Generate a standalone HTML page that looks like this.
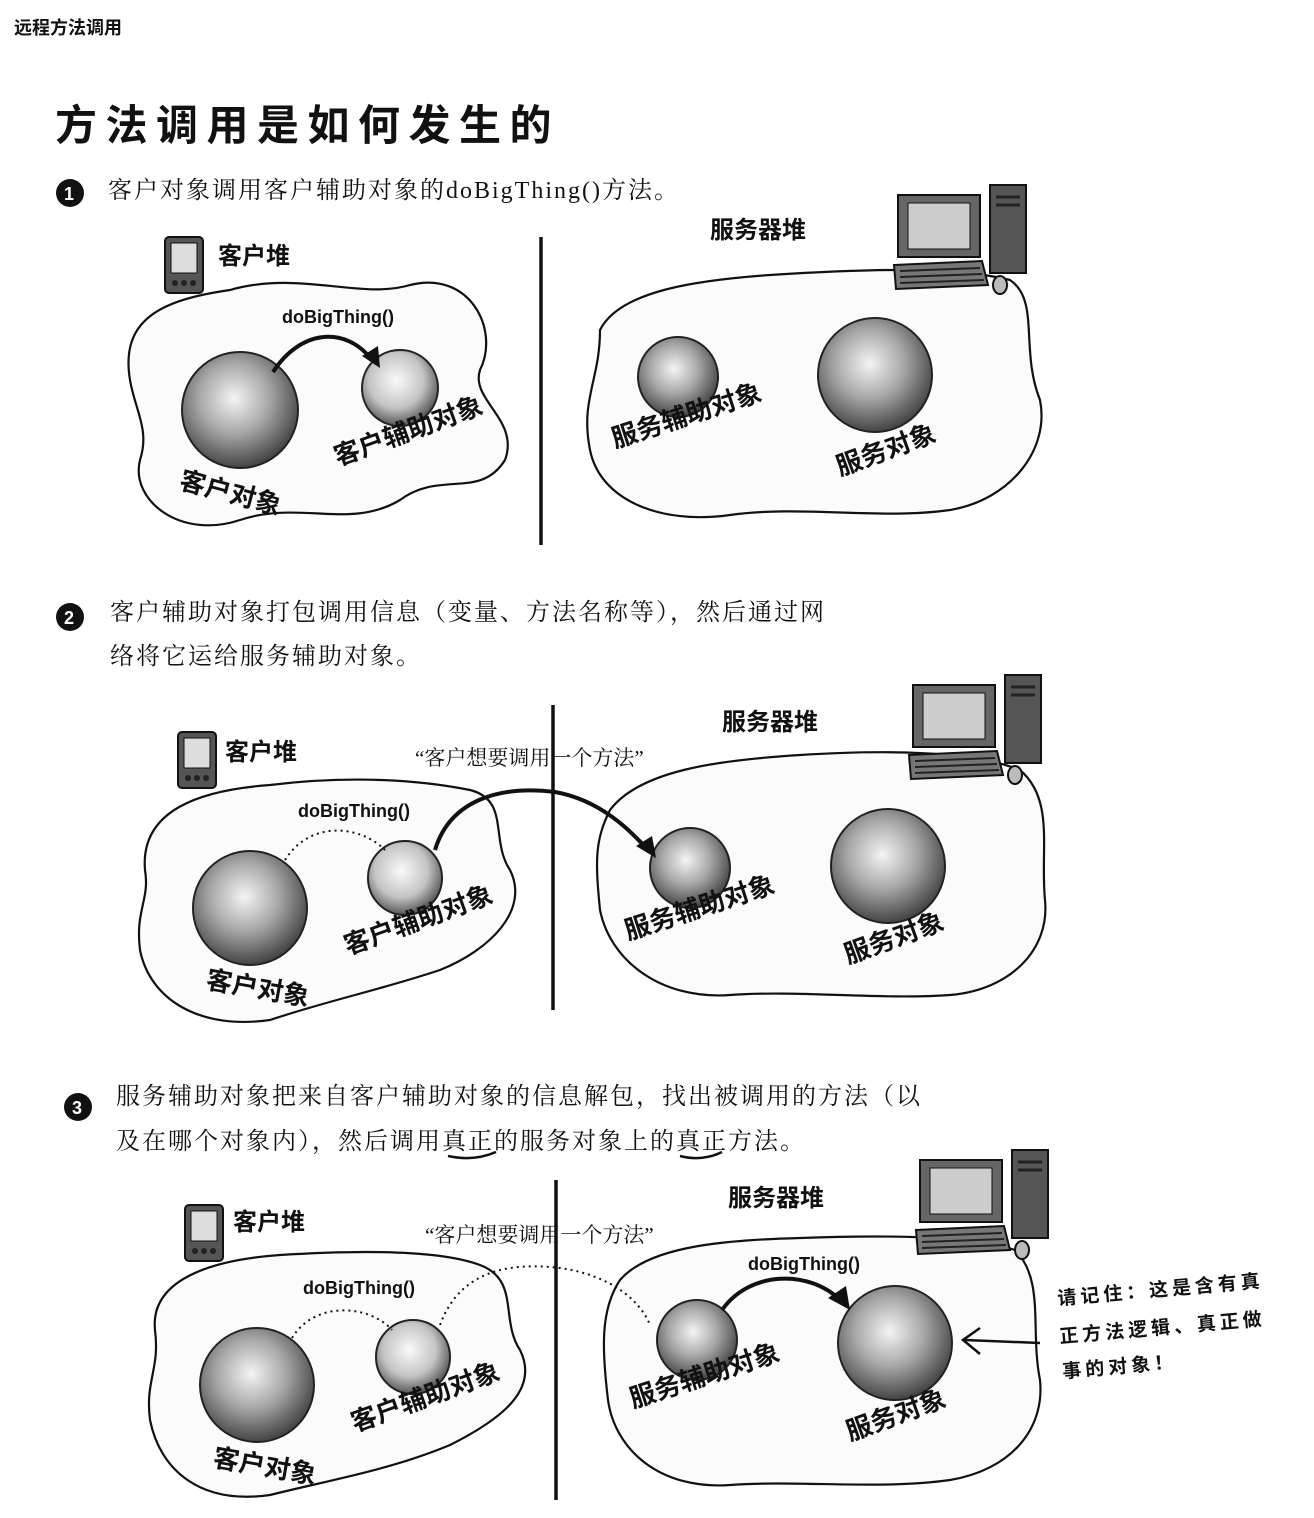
<!DOCTYPE html>
<html><head><meta charset="utf-8"><style>
html,body{margin:0;padding:0;background:#fff}
svg{display:block}
text{font-family:"Liberation Serif","Noto Serif CJK SC","Noto Sans CJK SC",serif;fill:#111}
.b{font-family:"Liberation Sans","Noto Sans CJK SC",sans-serif;font-weight:bold}
.hand{font-family:"Liberation Sans","Noto Sans CJK SC",sans-serif;font-weight:bold}
.st{font-size:24px;letter-spacing:2px}
.blob{fill:#fbfbfb;stroke:#111;stroke-width:2.2}
.div{stroke:#111;stroke-width:3.5}
.arr{fill:none;stroke:#111;stroke-width:4}
.dot{fill:none;stroke:#111;stroke-width:2;stroke-dasharray:2 4}
</style></head><body>
<svg width="1314" height="1518" viewBox="0 0 1314 1518" xmlns="http://www.w3.org/2000/svg">
<defs>
<radialGradient id="g" cx="0.45" cy="0.4" r="0.6">
<stop offset="0" stop-color="#f4f4f4"/><stop offset="0.5" stop-color="#a8a8a8"/><stop offset="1" stop-color="#444"/>
</radialGradient>
<radialGradient id="g2" cx="0.45" cy="0.4" r="0.6">
<stop offset="0" stop-color="#fafafa"/><stop offset="0.6" stop-color="#c4c4c4"/><stop offset="1" stop-color="#555"/>
</radialGradient>
<g id="pda"><rect x="0" y="0" width="38" height="56" rx="4" fill="#555" stroke="#111" stroke-width="2"/><rect x="6" y="6" width="26" height="30" fill="#ddd" stroke="#111"/><circle cx="10" cy="46" r="3" fill="#222"/><circle cx="19" cy="46" r="3" fill="#222"/><circle cx="28" cy="46" r="3" fill="#222"/></g>
<g id="pc"><rect x="8" y="10" width="82" height="62" fill="#666" stroke="#111" stroke-width="2"/><rect x="18" y="18" width="62" height="46" fill="#ccc" stroke="#111"/><rect x="100" y="0" width="36" height="88" fill="#555" stroke="#111" stroke-width="2"/><line x1="106" y1="12" x2="130" y2="12" stroke="#222" stroke-width="3"/><line x1="106" y1="20" x2="130" y2="20" stroke="#222" stroke-width="3"/><path d="M4 80 L92 76 L98 100 L6 104 Z" fill="#777" stroke="#111" stroke-width="2"/><path d="M10 86 L90 83 M10 92 L92 89 M10 98 L94 95" stroke="#222" stroke-width="2"/><ellipse cx="110" cy="100" rx="7" ry="9" fill="#bbb" stroke="#111" stroke-width="2"/></g>
</defs>
<rect width="1314" height="1518" fill="#fff"/>
<text x="14" y="34" class="b" font-size="18">远程方法调用</text>
<text x="55" y="140" class="hand" font-size="42" letter-spacing="8.5">方法调用是如何发生的</text>

<!-- step 1 -->
<circle cx="70" cy="193" r="14" fill="#111"/><text x="64" y="200" class="b" font-size="18" style="fill:#fff">1</text>
<text x="108" y="198" class="st">客户对象调用客户辅助对象的doBigThing()方法。</text>
<use href="#pda" x="165" y="237"/>
<text x="218" y="264" class="b" font-size="24">客户堆</text>
<path class="blob" d="M130 380 C120 320 160 300 230 290 C300 270 360 300 410 285 C470 270 500 330 480 370 C470 400 520 420 505 460 C480 500 440 470 400 500 C350 530 300 500 240 520 C180 540 130 500 140 460 C150 430 135 410 130 380Z"/>
<line class="div" x1="541" y1="237" x2="541" y2="545"/>
<text x="710" y="238" class="b" font-size="24">服务器堆</text>
<path class="blob" d="M600 330 C620 290 700 280 770 275 C850 270 950 265 1010 280 C1040 300 1020 350 1040 400 C1050 450 1010 500 950 510 C880 520 800 505 730 515 C660 525 600 500 590 450 C580 400 600 380 600 330Z"/>
<use href="#pc" x="890" y="185"/>
<circle cx="240" cy="410" r="58" fill="url(#g)" stroke="#222" stroke-width="2"/>
<circle cx="400" cy="388" r="38" fill="url(#g2)" stroke="#222" stroke-width="2"/>
<text x="282" y="323" class="b" font-size="18">doBigThing()</text>
<path class="arr" d="M273 372 C300 330 345 325 372 360"/><path d="M362 356 L380 368 L378 346 Z" fill="#111"/>
<text class="hand" font-size="26" transform="translate(338,466) rotate(-20)">客户辅助对象</text>
<text class="hand" font-size="26" transform="translate(178,488) rotate(15)">客户对象</text>
<circle cx="678" cy="377" r="40" fill="url(#g)" stroke="#222" stroke-width="2"/>
<circle cx="875" cy="375" r="57" fill="url(#g)" stroke="#222" stroke-width="2"/>
<text class="hand" font-size="26" transform="translate(615,448) rotate(-18)">服务辅助对象</text>
<text class="hand" font-size="26" transform="translate(840,476) rotate(-20)">服务对象</text>

<!-- step 2 -->
<circle cx="70" cy="617" r="14" fill="#111"/><text x="64" y="624" class="b" font-size="18" style="fill:#fff">2</text>
<text x="110" y="620" class="st">客户辅助对象打包调用信息（变量、方法名称等），然后通过网</text>
<text x="110" y="664" class="st">络将它运给服务辅助对象。</text>
<use href="#pda" x="178" y="732"/>
<text x="225" y="760" class="b" font-size="24">客户堆</text>
<text x="722" y="730" class="b" font-size="24">服务器堆</text>
<path class="blob" d="M145 870 C140 810 200 790 270 785 C350 775 420 780 470 790 C510 800 490 840 510 870 C530 910 490 950 440 970 C380 990 330 1000 270 1020 C200 1030 150 1000 140 950 C135 910 150 900 145 870Z"/>
<path class="blob" d="M610 810 C640 770 720 760 800 755 C880 750 970 750 1020 770 C1055 800 1040 850 1045 900 C1050 950 1010 990 950 995 C880 1000 800 990 730 995 C660 1000 610 960 600 910 C595 860 595 840 610 810Z"/>
<use href="#pc" x="905" y="675"/>
<text x="415" y="765" font-size="21">“客户想要调用一个方法”</text>
<line class="div" x1="553" y1="705" x2="553" y2="1010"/>
<circle cx="250" cy="908" r="57" fill="url(#g)" stroke="#222" stroke-width="2"/>
<circle cx="405" cy="878" r="37" fill="url(#g2)" stroke="#222" stroke-width="2"/>
<circle cx="690" cy="868" r="40" fill="url(#g)" stroke="#222" stroke-width="2"/>
<circle cx="888" cy="866" r="57" fill="url(#g)" stroke="#222" stroke-width="2"/>
<text x="298" y="817" class="b" font-size="18">doBigThing()</text>
<path class="dot" d="M285 860 C310 820 360 825 385 850"/>
<path class="arr" d="M435 850 C450 800 500 785 555 792 C600 800 630 830 648 850"/><path d="M636 846 L656 858 L652 836 Z" fill="#111"/>
<text class="hand" font-size="26" transform="translate(348,955) rotate(-20)">客户辅助对象</text>
<text class="hand" font-size="26" transform="translate(205,988) rotate(10)">客户对象</text>
<text class="hand" font-size="26" transform="translate(628,940) rotate(-18)">服务辅助对象</text>
<text class="hand" font-size="26" transform="translate(848,964) rotate(-20)">服务对象</text>

<!-- step 3 -->
<circle cx="78" cy="1107" r="14" fill="#111"/><text x="72" y="1114" class="b" font-size="18" style="fill:#fff">3</text>
<text x="116" y="1104" class="st">服务辅助对象把来自客户辅助对象的信息解包，找出被调用的方法（以</text>
<text x="116" y="1149" class="st">及在哪个对象内），然后调用真正的服务对象上的真正方法。</text>
<path d="M448 1156 C466 1160 482 1158 496 1152 M680 1156 C695 1160 710 1158 722 1152" stroke="#111" stroke-width="2.5" fill="none"/>
<use href="#pda" x="185" y="1205"/>
<text x="233" y="1230" class="b" font-size="24">客户堆</text>
<text x="728" y="1206" class="b" font-size="24">服务器堆</text>
<path class="blob" d="M155 1330 C150 1280 210 1260 280 1255 C360 1250 440 1250 480 1265 C520 1280 500 1320 520 1350 C540 1390 500 1420 450 1445 C390 1470 330 1480 270 1495 C200 1505 160 1470 150 1420 C145 1380 160 1370 155 1330Z"/>
<path class="blob" d="M620 1280 C650 1245 730 1240 800 1238 C880 1235 970 1235 1015 1250 C1045 1280 1030 1330 1040 1380 C1045 1430 1010 1470 950 1480 C880 1490 800 1480 730 1485 C660 1490 615 1450 608 1400 C602 1350 600 1310 620 1280Z"/>
<use href="#pc" x="912" y="1150"/>
<text x="425" y="1242" font-size="21">“客户想要调用一个方法”</text>
<line class="div" x1="556" y1="1180" x2="556" y2="1500"/>
<circle cx="257" cy="1385" r="57" fill="url(#g)" stroke="#222" stroke-width="2"/>
<circle cx="413" cy="1357" r="37" fill="url(#g2)" stroke="#222" stroke-width="2"/>
<circle cx="697" cy="1340" r="40" fill="url(#g)" stroke="#222" stroke-width="2"/>
<circle cx="895" cy="1343" r="57" fill="url(#g)" stroke="#222" stroke-width="2"/>
<text x="303" y="1294" class="b" font-size="18">doBigThing()</text>
<text x="748" y="1270" class="b" font-size="18">doBigThing()</text>
<path class="dot" d="M292 1338 C315 1300 370 1305 392 1330"/>
<path class="dot" d="M440 1325 C460 1270 510 1262 560 1268 C610 1275 640 1300 650 1325"/>
<path class="arr" d="M722 1310 C750 1270 810 1270 840 1300"/><path d="M828 1298 L850 1310 L846 1286 Z" fill="#111"/>
<text class="hand" font-size="26" transform="translate(355,1432) rotate(-20)">客户辅助对象</text>
<text class="hand" font-size="26" transform="translate(212,1466) rotate(10)">客户对象</text>
<text class="hand" font-size="26" transform="translate(633,1408) rotate(-18)">服务辅助对象</text>
<text class="hand" font-size="26" transform="translate(850,1441) rotate(-20)">服务对象</text>
<path d="M1040 1343 L965 1340 M980 1328 L963 1340 L980 1354" stroke="#111" stroke-width="2.5" fill="none"/>
<text class="hand" font-size="19" letter-spacing="4" transform="translate(1058,1305) rotate(-5)">请记住：这是含有真</text>
<text class="hand" font-size="19" letter-spacing="4" transform="translate(1060,1343) rotate(-5)">正方法逻辑、真正做</text>
<text class="hand" font-size="19" letter-spacing="4" transform="translate(1063,1378) rotate(-5)">事的对象！</text>
</svg>
</body></html>
